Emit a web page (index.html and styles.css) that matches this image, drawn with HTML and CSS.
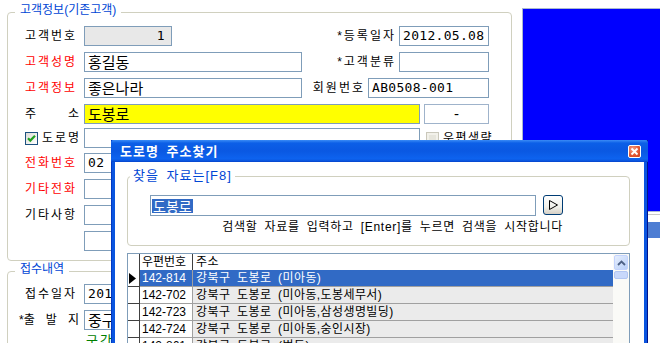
FILE: index.html
```html
<!DOCTYPE html>
<html lang="ko">
<head>
    <meta charset="UTF-8">
    <title>고객정보 - 도로명 주소찾기</title>
    <link rel="stylesheet" href="styles.css">
</head>
<body>
    <div class="screen">
        <div class="main">
            <fieldset class="group">
                <legend>고객정보(기존고객)</legend>
                <div class="fs-body rows">
                    <div class="row">
                        <span class="lbl">고객번호</span>
                        <div class="box ro num w-no">1</div>
                        <div class="pair">
                            <span class="lbl-r">*등록일자</span>
                            <div class="box num w-date">2012.05.08</div>
                        </div>
                    </div>
                    <div class="row">
                        <span class="lbl red">고객성명</span>
                        <div class="box w-mid">홍길동</div>
                        <div class="pair">
                            <span class="lbl-r">*고객분류</span>
                            <div class="box w-date"></div>
                        </div>
                    </div>
                    <div class="row">
                        <span class="lbl red">고객정보</span>
                        <div class="box w-mid">좋은나라</div>
                        <div class="pair">
                            <span class="lbl-r">회원번호</span>
                            <div class="box num w-member">AB0508-001</div>
                        </div>
                    </div>
                    <div class="row tight2">
                        <span class="lbl spread"><span>주</span><span>소</span></span>
                        <div class="box yellow w-long">도봉로</div>
                        <div class="btn">-</div>
                    </div>
                    <div class="row tight1">
                        <span class="lbl chk-lbl">
                            <span class="chk">
                                <svg width="11" height="11" viewBox="0 0 11 11"><path d="M2 5.2l2.3 2.4L9 2.8" fill="none" stroke="#21a121" stroke-width="2.2"/></svg>
                            </span>도로명
                        </span>
                        <div class="box w-long"></div>
                        <span class="chk off"></span>
                        <span class="chk-text">우편생략</span>
                    </div>
                    <div class="row">
                        <span class="lbl red">전화번호</span>
                        <div class="box num w-mid">02</div>
                    </div>
                    <div class="row">
                        <span class="lbl red">기타전화</span>
                        <div class="box w-mid"></div>
                    </div>
                    <div class="row">
                        <span class="lbl">기타사항</span>
                        <div class="box w-long"></div>
                    </div>
                    <div class="row">
                        <span class="lbl"></span>
                        <div class="box w-long"></div>
                    </div>
                </div>
            </fieldset>

            <fieldset class="group second">
                <legend>접수내역</legend>
                <div class="fs-body rows">
                    <div class="row">
                        <span class="lbl">접수일자</span>
                        <div class="box num w-mid">2012.05.08</div>
                    </div>
                    <div class="row">
                        <span class="lbl spread wide"><span>*출</span><span>발</span><span>지</span></span>
                        <div class="box w-mid">중구 을지로</div>
                    </div>
                    <div class="note">구간요금</div>
                </div>
            </fieldset>
        </div>

        <div class="side">
            <div class="panel"></div>
            <div class="side-list">
                <div class="side-sel"></div>
            </div>
        </div>
    </div>

    <div class="dialog">
        <div class="titlebar">
            <span>도로명 주소찾기</span>
            <span class="close">
                <svg width="11" height="11" viewBox="0 0 11 11"><path d="M2.5 2.5l6 6M8.5 2.5l-6 6" stroke="#fff" stroke-width="1.8"/></svg>
            </span>
        </div>
        <div class="client">
            <fieldset class="find">
                <legend>찾을 자료는[F8]</legend>
                <div class="find-body">
                    <div class="search-row">
                        <div class="search"><span class="picked">도봉로</span></div>
                        <div class="go">
                            <svg width="11" height="12" viewBox="0 0 11 12"><path d="M1.5 1.5L9.5 6 1.5 10.5z" fill="none" stroke="#000" stroke-width="1"/></svg>
                        </div>
                    </div>
                    <p class="hint">검색할 자료를 입력하고 [Enter]를 누르면 검색을 시작합니다</p>
                </div>
            </fieldset>

            <div class="grid">
                <div class="cells">
                    <div class="grow head">
                        <span class="ind"></span>
                        <span class="zip">우편번호</span>
                        <span class="addr">주소</span>
                    </div>
                    <div class="grow current">
                        <span class="ind"><svg width="7" height="11" viewBox="0 0 7 11"><path d="M0 0L7 5.5 0 11z"/></svg></span>
                        <span class="zip">142-814</span>
                        <span class="addr">강북구 도봉로 (미아동)</span>
                    </div>
                    <div class="grow">
                        <span class="ind"></span>
                        <span class="zip">142-702</span>
                        <span class="addr">강북구 도봉로 (미아동,도봉세무서)</span>
                    </div>
                    <div class="grow">
                        <span class="ind"></span>
                        <span class="zip">142-723</span>
                        <span class="addr">강북구 도봉로 (미아동,삼성생명빌딩)</span>
                    </div>
                    <div class="grow">
                        <span class="ind"></span>
                        <span class="zip">142-724</span>
                        <span class="addr">강북구 도봉로 (미아동,숭인시장)</span>
                    </div>
                    <div class="grow">
                        <span class="ind"></span>
                        <span class="zip">142-861</span>
                        <span class="addr">강북구 도봉로 (번동)</span>
                    </div>
                </div>
                <div class="vscroll">
                    <span class="sb-up">
                        <svg width="9" height="6" viewBox="0 0 9 6"><path d="M1 5l3.5-3.5L8 5" fill="none" stroke="#4d6185" stroke-width="1.8"/></svg>
                    </span>
                    <span class="sb-thumb"></span>
                </div>
            </div>
        </div>
    </div>
</body>
</html>
```

FILE: styles.css
```css
html, body {
    margin: 0;
    height: 100%;
    overflow: hidden;
}

body {
    position: relative;
    background-color: #fff;
    color: #000;
    font-family: "Liberation Sans", "Noto Sans CJK KR", sans-serif;
    font-size: 12px;
    line-height: 16px;
    word-spacing: 3px;
}

.screen {
    display: flex;
    padding: 3px 0 0 7px;
}

.main {
    width: 505px;
    flex: none;
}

/* group boxes */
.group {
    margin: 0;
    padding: 0;
    min-width: 0;
    border: 1px solid #d0d0bf;
    border-radius: 4px;
}

.group legend {
    margin-left: 7px;
    padding: 0 5px 4px;
    line-height: 14px;
    color: #0046d5;
    word-spacing: 0;
}

.group.second {
    margin-top: 1px;
}

.fs-body {
    padding: 5px 22px 9px 17px;
}

.second .fs-body {
    padding-top: 4px;
    padding-bottom: 0;
}

.rows {
    display: flex;
    flex-direction: column;
    gap: 6px;
}

.row {
    display: flex;
    align-items: center;
    height: 20px;
}

.row.tight2 {
    margin-bottom: -2px;
}

.row.tight1 {
    margin-bottom: -1px;
}

.lbl {
    width: 54px;
    margin-right: 5px;
    flex: none;
    letter-spacing: 2px;
    white-space: nowrap;
}

.lbl.red {
    color: #f00;
}

.lbl.spread {
    display: flex;
    justify-content: space-between;
    letter-spacing: 0;
}

.lbl.wide {
    width: 60px;
    margin-left: -6px;
}

.lbl.chk-lbl {
    display: flex;
    align-items: center;
    gap: 4px;
}

.pair {
    margin-left: auto;
    display: flex;
    align-items: center;
    gap: 3px;
}

.lbl-r {
    letter-spacing: 2px;
    white-space: nowrap;
}

/* text boxes */
.box {
    height: 20px;
    box-sizing: border-box;
    border: 1px solid #7f9db9;
    background-color: #fff;
    padding: 0 3px;
    font-family: "Noto Sans CJK KR", sans-serif;
    font-size: 15px;
    line-height: 18px;
    white-space: nowrap;
    overflow: hidden;
    flex: none;
}

.box.num {
    font-family: "DejaVu Sans Mono", monospace;
    font-size: 13px;
    letter-spacing: 0.3px;
}

.box.ro {
    background-color: #e8e8e8;
    text-align: right;
    padding-right: 6px;
}

.box.yellow {
    background-color: #ff0;
}

.w-no { width: 88px; }
.w-date { width: 90px; }
.w-mid { width: 218px; }
.w-member { width: 121px; }
.w-long { width: 336px; }

.btn {
    width: 65px;
    height: 20px;
    margin-left: 4px;
    box-sizing: border-box;
    border: 1px solid #9fb3cb;
    background-color: #fff;
    text-align: center;
    font-size: 15px;
    line-height: 17px;
}

.chk {
    width: 13px;
    height: 13px;
    flex: none;
    box-sizing: border-box;
    border: 1px solid #1c5180;
    background: linear-gradient(135deg, #dcdcd7, #fff);
    display: flex;
    align-items: center;
    justify-content: center;
}

.chk.off {
    margin-left: 6px;
    border-color: #cac8bb;
    background: #e6e5dc;
    box-shadow: inset 0 0 0 2px #f2f1ea;
}

.chk-text {
    margin-left: 4px;
    letter-spacing: 1.5px;
    white-space: nowrap;
}

.note {
    margin: -3px 0 0 61px;
    color: #008000;
    font-size: 13px;
    letter-spacing: 2px;
}

/* right side */
.side {
    flex: 1;
    margin: 5px 0 0 10px;
}

.panel {
    height: 204px;
    box-sizing: border-box;
    border: 1px solid #a9b8cf;
    border-right: 0;
    background-color: #00f;
}

.side-list {
    margin-top: 2px;
    border-top: 1px solid #c8c8c8;
    padding-top: 7px;
}

.side-sel {
    height: 16px;
    background-color: #4d7dd3;
}

/* dialog window */
.dialog {
    position: absolute;
    left: 111px;
    top: 140px;
    width: 537px;
    height: 230px;
    box-sizing: border-box;
    padding: 0 4px;
    background-color: #0a55e0;
    box-shadow: inset 1px 0 #0339c2, inset -1px 0 #00138c;
    display: flex;
    flex-direction: column;
}

.titlebar {
    height: 22px;
    flex: none;
    margin: 0 -4px;
    padding: 0 7px 0 9px;
    display: flex;
    align-items: center;
    justify-content: space-between;
    border-radius: 3px 3px 0 0;
    background: linear-gradient(#3a8cf6 0%, #0c5fe7 14%, #0a58e2 50%, #0d63ef 85%, #0a55dd 95%, #0440c8 100%);
    color: #fff;
    font-family: "Noto Sans CJK KR", sans-serif;
    font-size: 13px;
    font-weight: bold;
    letter-spacing: 1px;
}

.close {
    width: 13px;
    height: 13px;
    box-sizing: border-box;
    border: 1px solid #fff;
    border-radius: 2px;
    background: radial-gradient(circle at 35% 30%, #f3a088, #e2542f 60%, #c9421f);
    display: flex;
    align-items: center;
    justify-content: center;
}

.client {
    flex: 1;
    background-color: #fff;
    padding: 6px 14px 0 12px;
}

.find {
    margin: 0;
    padding: 0;
    min-width: 0;
    border: 1px solid #d0d0bf;
    border-radius: 4px;
}

.find legend {
    margin-left: 2px;
    padding: 0 3px;
    color: #0046d5;
    font-size: 13px;
    line-height: 16px;
    letter-spacing: 1px;
}

.find-body {
    padding: 11px 66px 10px 22px;
}

.search-row {
    display: flex;
    gap: 7px;
}

.search {
    flex: 1;
    height: 21px;
    box-sizing: border-box;
    border: 1px solid #7f9db9;
    padding-left: 1px;
    display: flex;
    align-items: center;
}

.picked {
    display: inline-block;
    height: 14px;
    padding: 0 1px;
    background-color: #316ac5;
    color: #fff;
    font-family: "Noto Sans CJK KR", sans-serif;
    font-size: 14px;
    line-height: 14px;
}

.go {
    width: 20px;
    height: 20px;
    box-sizing: border-box;
    border: 1px solid #003c74;
    border-radius: 3px;
    background: linear-gradient(#fff, #f0f0ea 60%, #d6d0c5);
    display: flex;
    align-items: center;
    justify-content: center;
}

.hint {
    margin: 3px 0 0;
    text-align: right;
    white-space: nowrap;
    letter-spacing: 0.7px;
}

/* result grid */
.grid {
    margin-top: 7px;
    height: 120px;
    border: 1px solid #7f9db9;
    display: flex;
}

.cells {
    flex: 1;
}

.grow {
    display: flex;
    height: 17px;
}

.grow > span {
    box-sizing: border-box;
    padding-left: 2px;
    white-space: nowrap;
    overflow: hidden;
}

.grow .ind {
    width: 12px;
    flex: none;
    padding-left: 1px;
    border-right: 1px solid #404040;
    border-bottom: 1px solid #404040;
    display: flex;
    align-items: center;
}

.grow .zip {
    width: 53px;
    flex: none;
    border-right: 1px solid #a0a0a0;
    border-bottom: 1px solid #a0a0a0;
}

.grow .addr {
    flex: 1;
    padding-left: 3px;
    background-color: #ebebeb;
    border-bottom: 1px solid #a0a0a0;
    letter-spacing: 0.4px;
}

.grow.head {
    height: 16px;
}

.grow.head > span {
    border-bottom: 0;
    background-color: #fff;
}

.grow.head .zip {
    border-right-color: #404040;
}

.grow.current .zip,
.grow.current .addr {
    background-color: #316ac5;
    color: #fff;
}

.vscroll {
    width: 16px;
    flex: none;
    box-sizing: border-box;
    padding: 1px 1px 0;
    background-color: #fafaf7;
    display: flex;
    flex-direction: column;
    gap: 1px;
}

.sb-up {
    height: 15px;
    box-sizing: border-box;
    border: 1px solid #c3d3fd;
    border-radius: 2px;
    background: linear-gradient(135deg, #e6eefd, #b9d0f9);
    display: flex;
    align-items: center;
    justify-content: center;
}

.sb-thumb {
    height: 8px;
    box-sizing: border-box;
    border: 1px solid #b2c6f2;
    border-radius: 2px;
    background-color: #c8d8fb;
}
```
